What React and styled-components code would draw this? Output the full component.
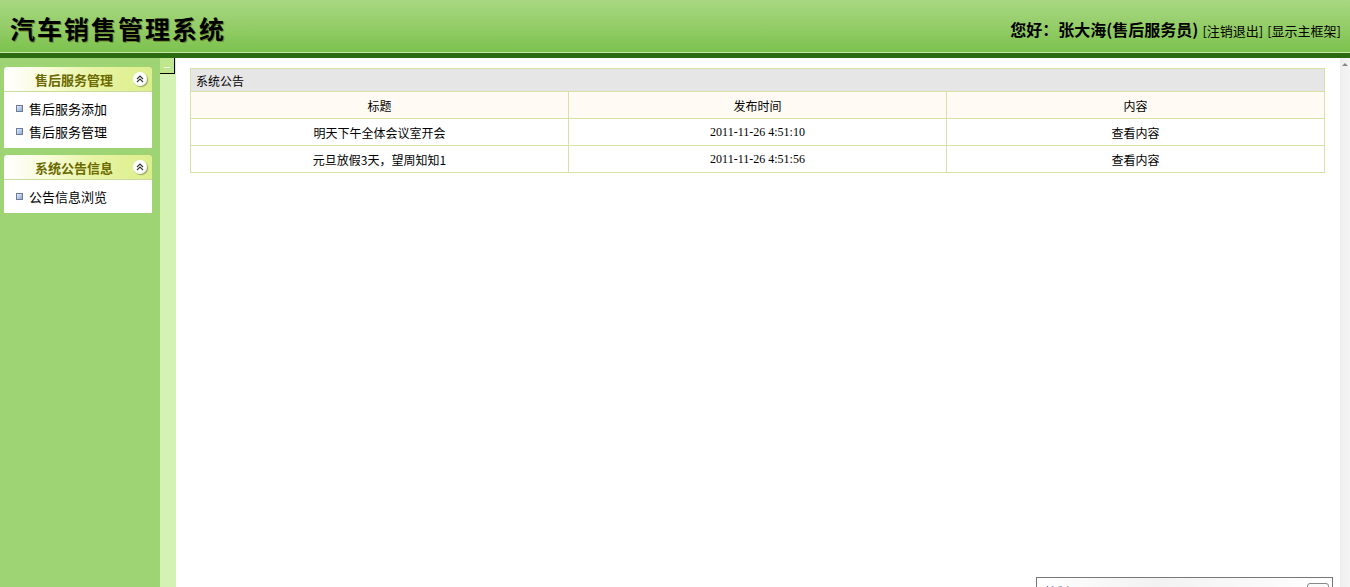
import React from "react";
import styled, { createGlobalStyle } from "styled-components";

const GlobalStyle = createGlobalStyle`
    html, body {
        margin: 0;
        padding: 0;
        height: 100%;
        overflow: hidden;
    }
    body {
        font-family: "Liberation Sans", "Noto Sans CJK SC", sans-serif;
        font-size: 12px;
        color: #000;
    }
`

const menus = [
    { title: "售后服务管理", items: ["售后服务添加", "售后服务管理"] },
    { title: "系统公告信息", items: ["公告信息浏览"] },
]

const notices = [
    { title: "明天下午全体会议室开会", time: "2011-11-26 4:51:10" },
    { title: "元旦放假3天，望周知知1", time: "2011-11-26 4:51:56" },
]

export default function App() {
    return (
        <Page>
            <GlobalStyle />
            <Header>
                <Title>汽车销售管理系统</Title>
                <UserInfo>
                    <Greeting>您好：张大海(售后服务员)</Greeting>
                    <HeadLink>[注销退出]</HeadLink>
                    <HeadLink>[显示主框架]</HeadLink>
                </UserInfo>
            </Header>
            <Body>
                <Sidebar>
                    {menus.map((m) => (
                        <MenuBox key={m.title}>
                            <MenuHead>
                                <MenuTitle>{m.title}</MenuTitle>
                                <Collapse>
                                    <svg width="8" height="8" viewBox="0 0 8 8">
                                        <path d="M1 4 L4 1 L7 4 M1 7 L4 4 L7 7" fill="none" stroke="#333" strokeWidth="1.1" />
                                    </svg>
                                </Collapse>
                            </MenuHead>
                            <MenuList>
                                {m.items.map((it) => (
                                    <MenuItem key={it}>
                                        <Bullet />
                                        {it}
                                    </MenuItem>
                                ))}
                            </MenuList>
                        </MenuBox>
                    ))}
                </Sidebar>
                <Splitter>
                    <ToggleButton />
                </Splitter>
                <Content>
                    <Table>
                        <tbody>
                            <tr>
                                <Caption colSpan={3}>系统公告</Caption>
                            </tr>
                            <tr>
                                <HeadCell>标题</HeadCell>
                                <HeadCell>发布时间</HeadCell>
                                <HeadCell>内容</HeadCell>
                            </tr>
                            {notices.map((n) => (
                                <tr key={n.time}>
                                    <Cell>{n.title}</Cell>
                                    <Cell serif>{n.time}</Cell>
                                    <Cell>查看内容</Cell>
                                </tr>
                            ))}
                        </tbody>
                    </Table>
                </Content>
                <ScrollBar>
                    <ScrollArrow />
                </ScrollBar>
                <Popup>
                    <PopupText>控制</PopupText>
                    <PopupButton />
                </Popup>
            </Body>
        </Page>
    )
}

const Page = styled.div`
    height: 100vh;
    display: flex;
    flex-direction: column;
`

const Header = styled.div`
    height: 52px;
    flex-shrink: 0;
    display: flex;
    align-items: center;
    justify-content: space-between;
    padding: 0 10px 0 10px;
    background: linear-gradient(to bottom, #a8d882 0%, #92cc66 55%, #7cc24e 100%);
    border-bottom: 1px solid #c4e8a6;
    box-shadow: 0 5px 0 #2a6a10;
    margin-bottom: 5px;
    position: relative;
    z-index: 2;
`

const Title = styled.h1`
    margin: 4px 0 0 0;
    font-family: "Noto Sans CJK SC", sans-serif;
    font-size: 25px;
    font-weight: 700;
    letter-spacing: 2px;
    color: #000;
    text-shadow: 1px 1px 0 #6a8a30;
`

const UserInfo = styled.div`
    display: flex;
    align-items: baseline;
    gap: 4px;
    margin-top: 6px;
    margin-right: -1px;
`

const Greeting = styled.span`
    font-family: "Noto Sans CJK SC", sans-serif;
    font-size: 16px;
    font-weight: 700;
    color: #000;
`

const HeadLink = styled.a`
    font-family: "Noto Sans CJK SC", sans-serif;
    font-size: 13px;
    color: #000;
    cursor: pointer;
`

const Body = styled.div`
    flex: 1;
    display: flex;
    min-height: 0;
    position: relative;
`

const Sidebar = styled.div`
    width: 158px;
    flex-shrink: 0;
    background: #9fd475;
    padding: 9px 6px 0 4px;
    box-sizing: border-box;
    display: flex;
    flex-direction: column;
    gap: 7px;
`

const MenuBox = styled.div`
    background: #fff;
    border-radius: 4px 4px 0 0;
`

const MenuHead = styled.div`
    height: 24px;
    display: flex;
    align-items: center;
    justify-content: center;
    position: relative;
    border-radius: 4px 4px 0 0;
    background: linear-gradient(to right, #ffffff 0%, #f8fcd8 30%, #e8f4a4 60%, #dcef8c 100%);
    border-bottom: 1px solid #c8dca0;
`

const MenuTitle = styled.span`
    font-family: "Noto Sans CJK SC", sans-serif;
    font-size: 13px;
    font-weight: 700;
    color: #6a6a00;
    margin-left: -8px;
`

const Collapse = styled.span`
    position: absolute;
    right: 5px;
    top: 5px;
    width: 14px;
    height: 14px;
    border-radius: 50%;
    background: radial-gradient(circle at 40% 35%, #ffffff 55%, #d8d8d8 100%);
    box-shadow: 1px 1px 1px rgba(0, 0, 0, 0.35);
    display: flex;
    align-items: center;
    justify-content: center;
`

const MenuList = styled.ul`
    list-style: none;
    margin: 0;
    padding: 5px 0 5px 12px;
`

const MenuItem = styled.li`
    height: 23px;
    display: flex;
    align-items: center;
    gap: 6px;
    font-family: "Noto Sans CJK SC", sans-serif;
    font-size: 13px;
    color: #000;
`

const Bullet = styled.span`
    width: 5px;
    height: 5px;
    border: 1px solid #6b7f9a;
    background: linear-gradient(135deg, #e0ecff, #8ea8d0);
`

const Splitter = styled.div`
    width: 18px;
    flex-shrink: 0;
    position: relative;
    background: #d4f2b4;
    border-left: 2px solid #9fd475;
    box-sizing: border-box;
`

const ToggleButton = styled.div`
    width: 15px;
    height: 16px;
    background: #bfe88e;
    border-right: 1px solid #000;
    border-bottom: 1px solid #000;
    box-sizing: border-box;
    position: relative;

    &::after {
        content: "";
        position: absolute;
        left: 4px;
        right: 4px;
        top: 9px;
        height: 1px;
        background: #f4fff0;
    }
`

const Content = styled.div`
    flex: 1;
    background: #fff;
    padding: 10px 15px 0 14px;
    min-width: 0;
`

const Table = styled.table`
    width: 100%;
    border-collapse: collapse;
    border: 1px solid #d8e0a8;
`

const Caption = styled.td`
    height: 22px;
    background: #e6e6e6;
    padding: 0 5px;
    font-family: "Noto Sans CJK SC", sans-serif;
    font-size: 12px;
    border-bottom: 1px solid #d8e0a8;
`

const HeadCell = styled.td`
    height: 26px;
    width: 33.33%;
    padding: 0;
    background: #fffbf4;
    text-align: center;
    font-family: "Noto Sans CJK SC", sans-serif;
    font-size: 12px;
    border: 1px solid #d8e0a8;
`

const Cell = styled.td`
    height: 26px;
    padding: 0;
    text-align: center;
    font-family: ${(p) => (p.serif ? `"Liberation Serif", serif` : `"Noto Sans CJK SC", sans-serif`)};
    font-size: 12px;
    border: 1px solid #d8e0a8;
`

const ScrollBar = styled.div`
    width: 10px;
    flex-shrink: 0;
    background: linear-gradient(to right, #eeeeee, #f4f4f4);
    padding-top: 5px;
    box-sizing: border-box;
`

const ScrollArrow = styled.div`
    width: 0;
    height: 0;
    margin-left: 2px;
    border-left: 3px solid transparent;
    border-right: 3px solid transparent;
    border-bottom: 3px solid #888;
`

const Popup = styled.div`
    position: absolute;
    left: 1036px;
    top: 519px;
    width: 297px;
    height: 40px;
    border: 1px solid #777;
    background: linear-gradient(to right, #fff, #f2f2f2 40%, #fff);
    box-sizing: border-box;
    display: flex;
    justify-content: space-between;
    padding: 5px 3px 0 8px;
`

const PopupText = styled.span`
    font-size: 12px;
    color: #2a2ab0;
`

const PopupButton = styled.span`
    width: 22px;
    height: 18px;
    border: 1px solid #888;
    border-radius: 3px;
    box-sizing: border-box;
    background: #fafafa;
`
